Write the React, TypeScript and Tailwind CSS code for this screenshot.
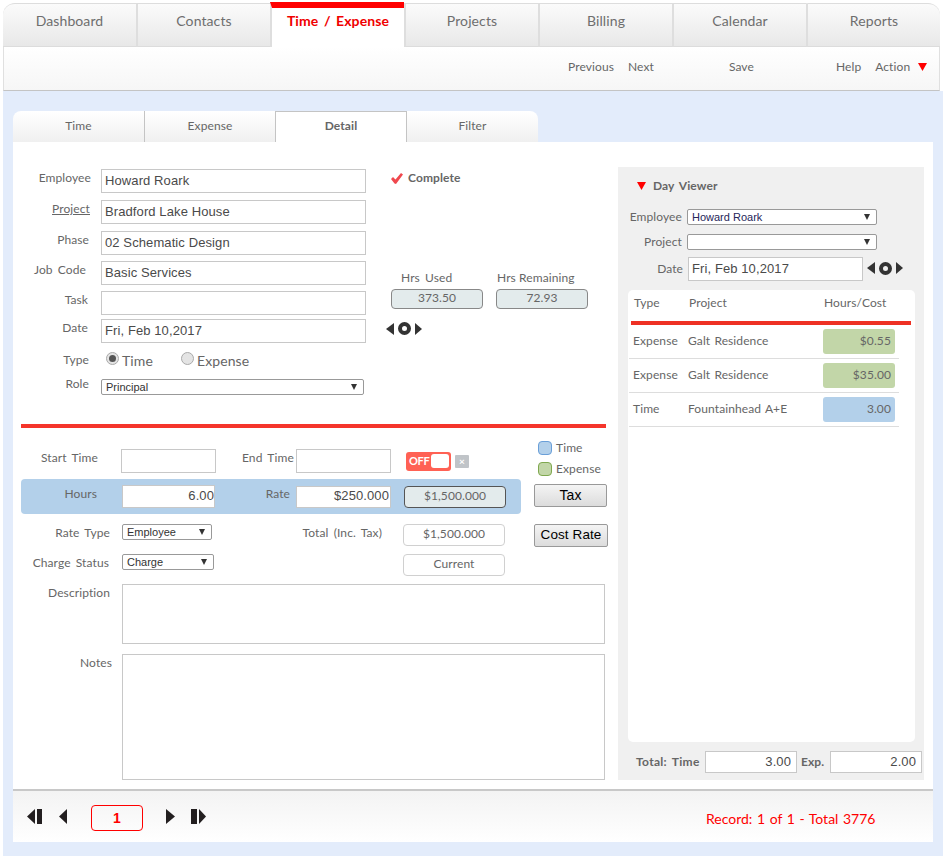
const Tri = ({ dir, className }: { dir: "l" | "r" | "d"; className: string }) => (
  <svg viewBox="0 0 10 10" preserveAspectRatio="none" className={className} fill="currentColor">
    {dir === "l" && <polygon points="10,0 10,10 0,5" />}
    {dir === "r" && <polygon points="0,0 10,5 0,10" />}
    {dir === "d" && <polygon points="0,0 10,0 5,10" />}
  </svg>
);

// date stepper: back, today, forward
const DateArrows = ({ className }: { className: string }) => (
  <div className={`flex items-center text-[#333] ${className}`}>
    <Tri dir="l" className="w-[8px] h-[12px]" />
    <div className="w-[13px] h-[13px] rounded-full border-[4px] border-[#333] mx-[4px]" />
    <Tri dir="r" className="w-[7px] h-[12px]" />
  </div>
);

const TextInput = ({ value = "", className = "" }: { value?: string; className?: string }) => (
  <input
    readOnly
    defaultValue={value}
    className={`border border-[#c8c8c8] bg-white px-[3px] pb-[2px] font-['Liberation_Sans',sans-serif] text-[13px] text-[#4a4a4a] outline-none ${className}`}
  />
);

const Select = ({ value = "", className = "" }: { value?: string; className?: string }) => (
  <div
    className={`flex items-center justify-between h-[16px] border border-[#999] rounded-[2px] bg-white pl-[4px] pr-[6px] font-['Liberation_Sans',sans-serif] text-[11px] tracking-normal [word-spacing:0] text-[#333] ${className}`}
  >
    <span>{value}</span>
    <Tri dir="d" className="w-[6px] h-[6px] text-[#333]" />
  </div>
);

const Radio = ({ on }: { on?: boolean }) => (
  <span className="flex items-center justify-center mb-[3px] w-[13px] h-[13px] rounded-full border border-[#aaa] bg-[#e4e4e4]">
    {on && <span className="w-[7px] h-[7px] rounded-full bg-[#555]" />}
  </span>
);

const FormRow = ({ label, labelPad = "pr-0", top, children, under }: { label: string; labelPad?: string; top: string; children: React.ReactNode; under?: boolean }) => (
  <div className={`flex items-center ${top}`}>
    <div className={`w-[78px] text-right pb-[6px] ${labelPad} ${under ? "underline" : ""}`}>{label}</div>
    <div className="ml-[10px] flex items-center">{children}</div>
  </div>
);

const tabs = ["Dashboard", "Contacts", "Time / Expense", "Projects", "Billing", "Calendar", "Reports"];
const subTabs = ["Time", "Expense", "Detail", "Filter"];
const dayRows = [
  { type: "Expense", project: "Galt Residence", val: "$0.55", chip: "bg-[#c2d6a8]" },
  { type: "Expense", project: "Galt Residence", val: "$35.00", chip: "bg-[#c2d6a8]" },
  { type: "Time", project: "Fountainhead A+E", val: "3.00", chip: "bg-[#b3d0ea]" },
];

export default function App() {
  return (
    <div className="w-[945px] h-[856px] bg-white overflow-hidden font-['Lato',sans-serif] text-[12px] tracking-[0.1px] [word-spacing:2px] text-[#666]">
      {/* Top nav */}
      <div className="ml-[3px] pt-[2px] w-[937px]">
        <div className="flex h-[45px]">
          {tabs.map((t, i) => {
            const active = i === 2;
            return (
              <div
                key={t}
                className={`flex items-center justify-center text-[14px] ${i === 0 ? "w-[133px] rounded-tl-[12px]" : "w-[134px] border-l-2 border-l-[#dedede]"} ${i === 6 ? "rounded-tr-[12px]" : ""} ${
                  active
                    ? "bg-white font-bold text-[#f00000] border-t-[6px] border-t-[#f00]"
                    : "mt-px bg-gradient-to-b from-[#fbfbfb] to-[#e8e8e8] border-t border-t-[#ddd] border-b border-b-[#dcdcdc] text-[#6e6e6e]"
                }`}
              >
                <span className={active ? "pb-[15px]" : "pb-[10px]"}>{t}</span>
              </div>
            );
          })}
        </div>
        {/* Toolbar */}
        <div className="flex items-center h-[44px] pb-[3px] bg-gradient-to-b from-white to-[#f6f6f6] border-b border-[#c4c4c4] border-l border-r border-l-[#e0e0e0] border-r-[#e0e0e0] pl-[564px]">
          <span>Previous</span>
          <span className="ml-[14px]">Next</span>
          <span className="ml-[75px]">Save</span>
          <span className="ml-[82px]">Help</span>
          <span className="ml-[14px]">Action</span>
          <Tri dir="d" className="ml-[8px] w-[9px] h-[8px] text-[#f00]" />
        </div>
      </div>

      {/* Blue page */}
      <div className="ml-[3px] w-[940px] h-[765px] bg-[#e3ecfb] pt-[20px] pl-[10px]">
        <div className="flex w-[526px] h-[31px]">
          {subTabs.map((t, i) => (
            <div
              key={t}
              className={`flex items-center justify-center pb-[2px] ${i === 0 ? "w-[131px] rounded-tl-[8px]" : "border-l border-[#c4c4c4]"} ${i === 1 || i === 2 ? "w-[131px]" : ""} ${i === 3 ? "w-[132px] rounded-tr-[8px]" : ""} ${
                i === 2 ? "bg-white font-bold border-t border-t-[#c4c4c4]" : "bg-gradient-to-b from-white to-[#f0f0f0]"
              }`}
            >
              {t}
            </div>
          ))}
        </div>

        <div className="w-[920px] bg-white">
          <div className="flex h-[647px]">
            {/* Left column */}
            <div className="w-[605px]">
              <div className="flex h-[282px]">
                <div className="w-[353px]">
                  <FormRow label="Employee" top="mt-[27px]">
                    <TextInput value="Howard Roark" className="w-[265px] h-[24px]" />
                  </FormRow>
                  <FormRow label="Project" labelPad="pr-[1px]" under top="mt-[7px]">
                    <TextInput value="Bradford Lake House" className="w-[265px] h-[24px]" />
                  </FormRow>
                  <FormRow label="Phase" labelPad="pr-[2px]" top="mt-[7px]">
                    <TextInput value="02 Schematic Design" className="w-[265px] h-[24px]" />
                  </FormRow>
                  <FormRow label="Job Code" labelPad="pr-[5px]" top="mt-[6px]">
                    <TextInput value="Basic Services" className="w-[265px] h-[24px]" />
                  </FormRow>
                  <FormRow label="Task" labelPad="pr-[3px]" top="mt-[6px]">
                    <TextInput className="w-[265px] h-[24px]" />
                  </FormRow>
                  <FormRow label="Date" labelPad="pr-[3px]" top="mt-[4px]">
                    <TextInput value="Fri, Feb 10,2017" className="w-[265px] h-[24px]" />
                  </FormRow>
                  <div className="flex items-center mt-[7px] h-[20px]">
                    <div className="w-[76px] text-right">Type</div>
                    <div className="ml-[17px] flex items-center text-[14px]">
                      <Radio on />
                      <span className="ml-[3px] w-[29px]">Time</span>
                      <span className="ml-[30px]"><Radio /></span>
                      <span className="ml-[3px]">Expense</span>
                    </div>
                  </div>
                  <div className="flex items-center mt-[5px]">
                    <div className="w-[76px] text-right pb-[6px]">Role</div>
                    <Select value="Principal" className="ml-[12px] w-[263px]" />
                  </div>
                </div>
                <div className="pl-[25px]">
                  <div className="flex items-center mt-[27px] h-[18px] font-bold">
                    <svg viewBox="0 0 12 11" className="w-[12px] h-[11px] text-[#f0484e]" fill="currentColor">
                      <polygon points="0,6 2,4 4.5,6.5 10,0 12,1.5 5,11 3.5,10.5" />
                    </svg>
                    <span className="ml-[5px]">Complete</span>
                  </div>
                  <div className="flex mt-[83px] h-[16px] items-center">
                    <span className="ml-[10px] w-[96px]">Hrs Used</span>
                    <span className="[word-spacing:0]">Hrs Remaining</span>
                  </div>
                  <div className="flex mt-[3px]">
                    <div className="flex items-center justify-center pb-[2px] w-[92px] h-[20px] bg-[#e3ebec] border border-[#888] rounded-[4px]">373.50</div>
                    <div className="flex items-center justify-center pb-[2px] ml-[13px] w-[92px] h-[20px] bg-[#e3ebec] border border-[#888] rounded-[4px]">72.93</div>
                  </div>
                  <DateArrows className="mt-[13px] -ml-[5px]" />
                </div>
              </div>

              <div className="ml-[8px] w-[585px] h-[4px] bg-[#f5352b]" />

              {/* Time section */}
              <div className="flex ml-[8px]">
                <div className="w-[513px]">
                  <div className="flex items-center mt-[21px] h-[24px]">
                    <div className="w-[77px] text-right pb-[6px]">Start Time</div>
                    <TextInput className="ml-[23px] w-[95px] h-[24px]" />
                    <div className="ml-[26px] w-[51px] text-right pb-[6px] whitespace-nowrap">End Time</div>
                    <TextInput className="ml-[3px] w-[95px] h-[24px]" />
                    <div className="ml-[15px] flex items-center justify-between w-[45px] h-[19px] rounded-[3px] bg-[#ff6154] pl-[3px] pr-[2px] text-[11px] font-bold tracking-[-0.3px] text-white">
                      <span>OFF</span>
                      <span className="w-[18px] h-[14px] rounded-[3px] bg-white" />
                    </div>
                    <div className="ml-[4px] flex items-center justify-center w-[14px] h-[13px] rounded-[1px] bg-[#c0c4c8] text-[10px] font-bold text-white">×</div>
                  </div>

                  <div className="flex items-center mt-[6px] w-[500px] h-[35px] rounded-[4px] bg-[#b3d0ea]">
                    <div className="w-[76px] text-right pb-[6px]">Hours</div>
                    <TextInput value="6.00" className="ml-[25px] w-[93px] h-[23px] text-right !px-0" />
                    <div className="w-[75px] text-right pb-[6px]">Rate</div>
                    <TextInput value="$250.000" className="ml-[6px] w-[95px] h-[22px] text-right !pr-[1px]" />
                    <div className="flex items-center justify-center pb-[2px] ml-[13px] w-[102px] h-[22px] bg-[#e3ebec] border border-[#555] rounded-[4px]">$1,500.000</div>
                  </div>

                  <div className="flex items-center mt-[10px] h-[22px]">
                    <div className="w-[89px] text-right pb-[5px]">Rate Type</div>
                    <Select value="Employee" className="ml-[12px] w-[90px] mb-[6px]" />
                    <div className="w-[170px] text-right pb-[4px]">Total (Inc. Tax)</div>
                    <div className="flex items-center justify-center pb-[2px] ml-[21px] w-[102px] h-[22px] border border-[#d0d0d0] rounded-[4px]">$1,500.000</div>
                  </div>

                  <div className="flex items-center mt-[8px] h-[22px]">
                    <div className="w-[88px] text-right pb-[5px] whitespace-nowrap">Charge Status</div>
                    <Select value="Charge" className="ml-[13px] w-[92px] mb-[6px]" />
                    <div className="flex items-center justify-center pb-[2px] ml-[189px] w-[102px] h-[22px] border border-[#d0d0d0] rounded-[4px]">Current</div>
                  </div>
                </div>

                <div className="w-[74px]">
                  <div className="flex items-center mt-[13px] h-[14px]">
                    <span className="ml-[4px] w-[14px] h-[14px] rounded-[4px] bg-[#b3d0ea] border border-[#6a9fd8]" />
                    <span className="ml-[4px]">Time</span>
                  </div>
                  <div className="flex items-center mt-[7px] h-[14px]">
                    <span className="ml-[4px] w-[14px] h-[14px] rounded-[4px] bg-[#c2d6a8] border border-[#7fa84f]" />
                    <span className="ml-[4px]">Expense</span>
                  </div>
                  <button className="block mt-[8px] w-[73px] h-[23px] border border-[#999] rounded-[2px] bg-gradient-to-b from-[#f4f4f4] to-[#dcdcdc] font-['Liberation_Sans',sans-serif] text-[14px] text-black">
                    Tax
                  </button>
                  <button className="block mt-[17px] w-[74px] h-[23px] border border-[#999] rounded-[2px] bg-gradient-to-b from-[#f4f4f4] to-[#dcdcdc] font-['Liberation_Sans',sans-serif] text-[13.5px] text-black">
                    Cost Rate
                  </button>
                </div>
              </div>

              <div className="flex mt-[8px]">
                <div className="w-[97px] text-right">Description</div>
                <div className="ml-[12px] w-[483px] h-[60px] border border-[#c8c8c8]" />
              </div>
              <div className="flex mt-[10px]">
                <div className="w-[99px] text-right">Notes</div>
                <div className="ml-[10px] w-[483px] h-[126px] border border-[#c8c8c8]" />
              </div>
            </div>

            {/* Day viewer */}
            <div className="mt-[25px] w-[306px] h-[613px] bg-[#f0f0f0] flex flex-col">
              <div className="flex items-center mt-[10px] ml-[19px] h-[18px] font-bold">
                <Tri dir="d" className="w-[9px] h-[8px] text-[#f00]" />
                <span className="ml-[7px]">Day Viewer</span>
              </div>
              <div className="flex items-center mt-[14px] h-[16px]">
                <div className="w-[64px] text-right">Employee</div>
                <Select value="Howard Roark" className="ml-[5px] w-[190px] !text-[#26265a]" />
              </div>
              <div className="flex items-center mt-[9px] h-[16px]">
                <div className="w-[64px] text-right">Project</div>
                <Select className="ml-[5px] w-[190px]" />
              </div>
              <div className="flex items-center mt-[7px] h-[24px]">
                <div className="w-[65px] text-right">Date</div>
                <TextInput value="Fri, Feb 10,2017" className="ml-[5px] w-[175px] h-[24px]" />
                <DateArrows className="ml-[4px] pb-[2px]" />
              </div>
              <div className="mt-[9px] ml-[10px] w-[287px] h-[452px] bg-white rounded-[5px]">
                <div className="flex items-center h-[31px] pb-[5px]">
                  <span className="ml-[6px] w-[55px]">Type</span>
                  <span className="w-[135px]">Project</span>
                  <span>Hours/Cost</span>
                </div>
                <div className="ml-[3px] w-[280px] h-[4px] bg-[#ee3124]" />
                {dayRows.map((r, i) => (
                  <div key={i} className="flex items-center ml-[1px] w-[270px] h-[34px] border-b border-[#ddd]">
                    <span className="ml-[4px] w-[55px] pb-[2px]">{r.type}</span>
                    <span className="w-[135px] pb-[2px] [word-spacing:1px]">{r.project}</span>
                    <span className={`flex items-center justify-end pb-[2px] w-[72px] h-[25px] rounded-[3px] pr-[4px] ${r.chip}`}>{r.val}</span>
                  </div>
                ))}
              </div>
              <div className="flex items-center mt-[9px] h-[22px] font-bold">
                <span className="ml-[18px] w-[64px] whitespace-nowrap tracking-[0.3px]">Total: Time</span>
                <TextInput value="3.00" className="ml-[5px] w-[92px] h-[22px] text-right font-normal !pr-[5px]" />
                <span className="ml-[4px] w-[25px]">Exp.</span>
                <TextInput value="2.00" className="ml-[4px] w-[92px] h-[22px] text-right font-normal !pr-[5px]" />
              </div>
            </div>
          </div>

          {/* Record bar */}
          <div className="flex items-center h-[53px] border-t-2 border-[#c8c8c8] bg-gradient-to-b from-[#f3f3f3] to-white text-[#231f20]">
            <Tri dir="l" className="ml-[14px] w-[8px] h-[15px]" />
            <div className="ml-[2px] w-[5px] h-[15px] bg-[#231f20]" />
            <Tri dir="l" className="ml-[17px] w-[8px] h-[15px]" />
            <div className="flex items-center justify-center mt-[3px] ml-[24px] w-[52px] h-[26px] rounded-[4px] border border-[#f00] font-['Liberation_Sans',sans-serif] text-[14px] font-bold text-[#f00]">
              1
            </div>
            <Tri dir="r" className="ml-[23px] w-[9px] h-[15px]" />
            <div className="ml-[16px] w-[6px] h-[15px] bg-[#231f20]" />
            <Tri dir="r" className="ml-[2px] w-[7px] h-[15px]" />
            <span className="ml-[500px] pt-[3px] text-[14px] tracking-normal [word-spacing:1px] text-[#f00]">Record: 1 of 1 - Total 3776</span>
          </div>
        </div>
      </div>
    </div>
  );
}
